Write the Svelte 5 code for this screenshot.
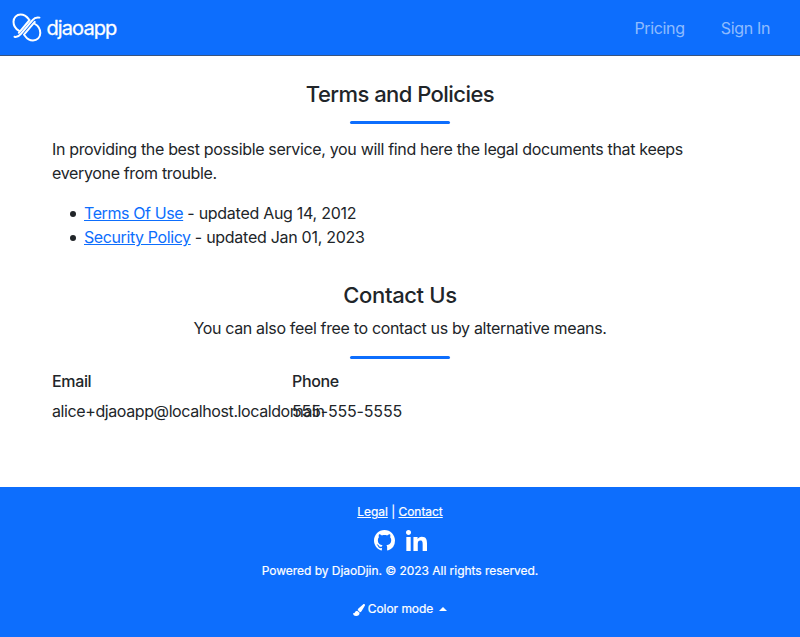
<script>
  const navLinks = ["Pricing", "Sign In"];

  const policies = [
    { title: "Terms Of Use", updated: "Aug 14, 2012" },
    { title: "Security Policy", updated: "Jan 01, 2023" },
  ];

  const contacts = [
    { label: "Email", value: "alice+djaoapp@localhost.localdomain" },
    { label: "Phone", value: "555-555-5555" },
  ];
</script>

<header>
  <a class="brand" href="#home">
    <svg class="logo" viewBox="0 0 30 30" aria-hidden="true">
      <path d="M27.500 4.600C24.600 3.900 22.500 4.700 20.500 7.200L9 20.800C7 23.200 5 24.400 2.500 23.800" />
      <path d="M6.800 17.700C3 15.500 1.500 12.500 1.500 8.800C1.500 4.600 4.500 1.500 8.600 1.500C12 1.500 14.500 3.200 16.700 6.200M17.600 7L6.800 19.800" />
      <path d="M23 11C26.500 13 28.300 16.500 28.300 20C28.300 24.400 25.200 27.500 21 27.500C17.500 27.500 15 25.700 12.900 22.700M12 21.700L22.800 8.900" />
    </svg>
    <span>djaoapp</span>
  </a>
  <nav>
    {#each navLinks as link}
      <a href="#nav">{link}</a>
    {/each}
  </nav>
</header>

<main>
  <section class="policies">
    <h1>Terms and Policies</h1>
    <div class="divider"></div>
    <p>
      In providing the best possible service, you will find here the legal
      documents that keeps everyone from trouble.
    </p>
    <ul>
      {#each policies as policy}
        <li>
          <a href="#legal">{policy.title}</a> <span>- updated {policy.updated}</span>
        </li>
      {/each}
    </ul>
  </section>

  <section class="contact">
    <h1 class="wide">Contact Us</h1>
    <p class="lead">You can also feel free to contact us by alternative means.</p>
    <div class="divider"></div>
    <div class="row">
      {#each contacts as contact}
        <div class="col">
          <h2>{contact.label}</h2>
          <p>{contact.value}</p>
        </div>
      {/each}
    </div>
  </section>
</main>

<footer>
  <div class="links">
    <a href="#legal">Legal</a> | <a href="#contact">Contact</a>
  </div>
  <div class="social">
    <a href="#github" aria-label="GitHub">
      <svg class="github" viewBox="0 0 16 16">
        <path d="M8 0C3.580 0 0 3.580 0 8c0 3.540 2.290 6.530 5.470 7.590.4.070.55-.170.55-.380 0-.190-.010-.820-.010-1.490-2.010.370-2.530-.490-2.690-.940-.090-.230-.480-.940-.820-1.130-.280-.150-.680-.520-.010-.530.630-.010 1.080.580 1.230.820.720 1.210 1.870.870 2.330.660.070-.520.280-.870.510-1.070-1.780-.2-3.640-.890-3.640-3.950 0-.870.310-1.590.820-2.150-.080-.2-.360-1.020.080-2.120 0 0 .670-.210 2.200.820.640-.180 1.320-.270 2-.270s1.360.090 2 .270c1.530-1.040 2.200-.820 2.200-.820.440 1.100.160 1.920.080 2.120.510.560.820 1.270.820 2.150 0 3.070-1.870 3.750-3.650 3.950.290.250.540.730.540 1.480 0 1.070-.010 1.930-.010 2.200 0 .210.150.460.550.380A8.010 8.010 0 0 0 16 8c0-4.420-3.580-8-8-8z" />
      </svg>
    </a>
    <a href="#linkedin" aria-label="LinkedIn">
      <svg class="linkedin" viewBox="0 0 448 448">
        <path d="M100.280 448H7.400V148.900h92.880zM53.790 108.100C24.090 108.100 0 83.500 0 53.800a53.790 53.790 0 0 1 107.580 0c0 29.700-24.100 54.300-53.790 54.300zM447.900 448h-92.680V302.400c0-34.700-.7-79.200-48.290-79.200-48.290 0-55.690 37.700-55.690 76.700V448h-92.780V148.900h89.080v40.800h1.300c12.400-23.500 42.690-48.300 87.880-48.300 94 0 111.280 61.900 111.280 142.300V448z" />
      </svg>
    </a>
  </div>
  <p class="copyright">Powered by DjaoDjin. © 2023 All rights reserved.</p>
  <button class="color-mode">
    <svg viewBox="0 0 12 12" aria-hidden="true">
      <path d="M11.600.3c.5.400.5.900.2 1.500L8.500 7.200c-.4.500-.9.900-1.500 1L4.700 6.100c0-.6.300-1.200.7-1.600L10 .4c.5-.4 1.200-.5 1.600-.1zM4.200 6.700l2.400 2.100C6.600 10.900 5.100 12 3.200 12 1 12 .1 10.700 0 8.900c.8.500 1.500.4 1.800-.3.400-1.100 1.200-1.900 2.400-1.900z" />
    </svg>
    <span>Color mode</span>
    <i class="caret"></i>
  </button>
</footer>

<style>
  :global(body) {
    background: #fff;
    color: #212529;
    font-family: Inter, "Liberation Sans", sans-serif;
    font-size: 16px;
    line-height: 24px;
    letter-spacing: -0.34px;
  }
  h1,
  h2,
  p,
  ul {
    margin: 0;
  }
  header {
    display: flex;
    align-items: center;
    justify-content: space-between;
    box-sizing: border-box;
    height: 56px;
    padding: 0 30px 0 12px;
    background: #0d6efd;
    border-bottom: 1px solid #38547f;
  }
  .brand {
    display: flex;
    align-items: center;
    gap: 4.500px;
    color: #fff;
    font-size: 20px;
    letter-spacing: -0.9px;
    text-decoration: none;
    -webkit-text-stroke: 0.3px #fff;
  }
  .logo {
    width: 30px;
    height: 30px;
    margin-top: 1px;
    fill: none;
    stroke: #fff;
    stroke-width: 2;
    stroke-linecap: round;
    stroke-linejoin: round;
  }
  nav {
    display: flex;
    gap: 36px;
  }
  nav a {
    color: rgba(255, 255, 255, 0.55);
    text-decoration: none;
  }
  main {
    box-sizing: border-box;
    width: 720px;
    height: 431px;
    margin: 0 auto;
    padding: 24px 12px 0;
  }
  h1 {
    font-size: 22px;
    font-weight: 500;
    line-height: 28px;
    letter-spacing: -0.55px;
    text-align: center;
  }
  .wide {
    letter-spacing: -0.36px;
  }
  .divider {
    width: 100px;
    height: 3px;
    margin: 12.500px auto 13.500px;
    border-radius: 2px;
    background: #0d6efd;
  }
  ul {
    margin-top: 16px;
    padding-left: 32px;
    list-style: none;
  }
  li::before {
    content: "";
    display: inline-block;
    width: 6px;
    height: 6px;
    margin: 0 8px 2px -14px;
    border-radius: 50%;
    background: #212529;
  }
  li a {
    color: #0d6efd;
    letter-spacing: -0.4px;
  }
  li span {
    letter-spacing: -0.28px;
  }
  .contact {
    margin-top: 32px;
  }
  .lead {
    margin-top: 7px;
    text-align: center;
  }
  .contact .divider {
    margin: 15.500px auto 10.500px;
  }
  .row {
    display: flex;
  }
  .col {
    width: 240px;
    white-space: nowrap;
  }
  .col:first-child p {
    letter-spacing: -0.4px;
  }
  .col:last-child p {
    letter-spacing: -0.16px;
  }
  h2 {
    margin-bottom: 6px;
    font-size: 16px;
    font-weight: 500;
  }
  footer {
    display: flex;
    flex-direction: column;
    align-items: center;
    box-sizing: border-box;
    height: 150px;
    padding-top: 16px;
    background: #0d6efd;
    color: #fff;
    font-size: 12px;
    line-height: 18px;
    letter-spacing: -0.04px;
    -webkit-text-stroke: 0.2px #fff;
  }
  footer a {
    color: #fff;
  }
  .social {
    display: flex;
    gap: 11px;
    height: 21px;
    margin-top: 9px;
  }
  .social svg {
    display: block;
    width: 21px;
    height: 21px;
    fill: #fff;
  }
  .copyright {
    margin-top: 11px;
  }
  .color-mode {
    display: flex;
    align-items: center;
    margin-top: 20px;
    padding: 0;
    border: 0;
    background: none;
    color: #fff;
    font: inherit;
    letter-spacing: inherit;
  }
  .color-mode svg {
    width: 12px;
    height: 12px;
    margin: 2px 3px 0 0;
    fill: #fff;
  }
  .caret {
    margin-left: 6px;
    border-right: 4px solid transparent;
    border-bottom: 4px solid #fff;
    border-left: 4px solid transparent;
  }
</style>
